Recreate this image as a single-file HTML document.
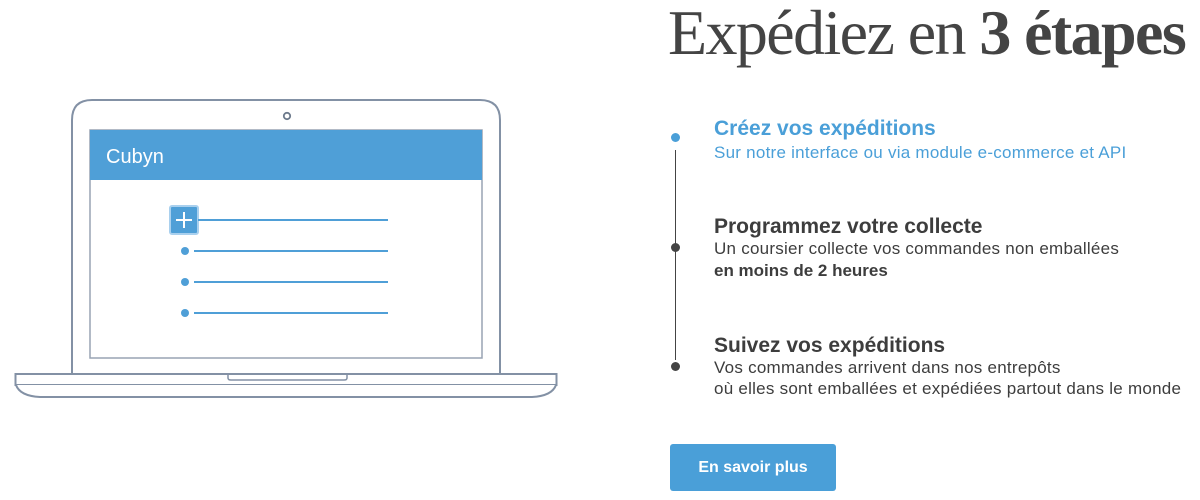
<!DOCTYPE html>
<html><head><meta charset="utf-8"><style>
body{margin:0;width:1200px;height:500px;background:#fff;position:relative;overflow:hidden;font-family:"Liberation Sans",sans-serif}
.t{position:absolute;white-space:nowrap}
h1{position:absolute;left:668px;top:-4px;margin:0;font-family:"Liberation Serif",serif;font-weight:normal;font-size:64px;color:#444;white-space:nowrap;letter-spacing:-1.6px}
h1 b{font-weight:bold}
.h{font-weight:bold;font-size:21px;color:#3d3d3d}
.s{font-size:17px;color:#3d3d3d;letter-spacing:0.25px}
.dot{position:absolute;width:9px;height:9px;border-radius:50%;background:#444;left:671px}
.btn{position:absolute;left:670px;top:444px;width:166px;height:47px;background:#4a9fd8;border-radius:3px;color:#fff;font-weight:bold;font-size:16px;text-align:center;line-height:47px}
</style></head><body>
<svg width="600" height="420" style="position:absolute;left:0;top:0">
<path d="M72 374 V120 Q72 100 92 100 H480 Q500 100 500 120 V374" fill="#fff" stroke="#8391a5" stroke-width="2"/>
<circle cx="287" cy="116" r="3.2" fill="none" stroke="#6d7a8c" stroke-width="1.8"/>
<rect x="90" y="130" width="392" height="228" fill="#fff" stroke="#98a3b3" stroke-width="1.5"/>
<rect x="90" y="130" width="392" height="50" fill="#4f9fd7"/>
<text x="106" y="163" fill="#fff" font-family="Liberation Sans" font-size="20">Cubyn</text>
<rect x="15.5" y="374" width="541" height="11" fill="#fff" stroke="#8391a5" stroke-width="2"/>
<path d="M16 385 Q20 396 40 397 H532 Q552 396 556 385" fill="#fff" stroke="#8391a5" stroke-width="2"/>
<path d="M228 375 V378 Q228 380 231 380 H344 Q347 380 347 378 V375" fill="none" stroke="#8391a5" stroke-width="1.5"/>
<rect x="170" y="206" width="28" height="28" rx="2" fill="#4f9fd7" stroke="#a9d0ee" stroke-width="2"/>
<path d="M184 212 V228 M176 220 H192" stroke="#fff" stroke-width="2"/>
<g stroke="#4f9fd7" stroke-width="2"><line x1="198" y1="220" x2="388" y2="220"/><line x1="194" y1="251" x2="388" y2="251"/><line x1="194" y1="282" x2="388" y2="282"/><line x1="194" y1="313" x2="388" y2="313"/></g>
<g fill="#4f9fd7"><circle cx="185" cy="251" r="4"/><circle cx="185" cy="282" r="4"/><circle cx="185" cy="313" r="4"/></g>
</svg>
<h1>Expédiez en <b>3 étapes</b></h1>
<div style="position:absolute;left:675px;top:150px;width:1px;height:210px;background:#444"></div>
<div class="dot" style="top:133px;background:#4a9fd8;left:671px"></div>
<div class="dot" style="top:243px"></div>
<div class="dot" style="top:362px"></div>
<div class="t h" style="left:714px;top:117px;color:#4a9fd8">Créez vos expéditions</div>
<div class="t s" style="left:714px;top:143px;color:#4a9fd8">Sur notre interface ou via module e-commerce et API</div>
<div class="t h" style="left:714px;top:215px">Programmez votre collecte</div>
<div class="t s" style="left:714px;top:239px">Un coursier collecte vos commandes non emballées</div>
<div class="t s" style="left:714px;top:261px;font-weight:bold;letter-spacing:0">en moins de 2 heures</div>
<div class="t h" style="left:714px;top:334px">Suivez vos expéditions</div>
<div class="t s" style="left:714px;top:358px">Vos commandes arrivent dans nos entrepôts</div>
<div class="t s" style="left:714px;top:379px">où elles sont emballées et expédiées partout dans le monde</div>
<div class="btn">En savoir plus</div>
</body></html>
